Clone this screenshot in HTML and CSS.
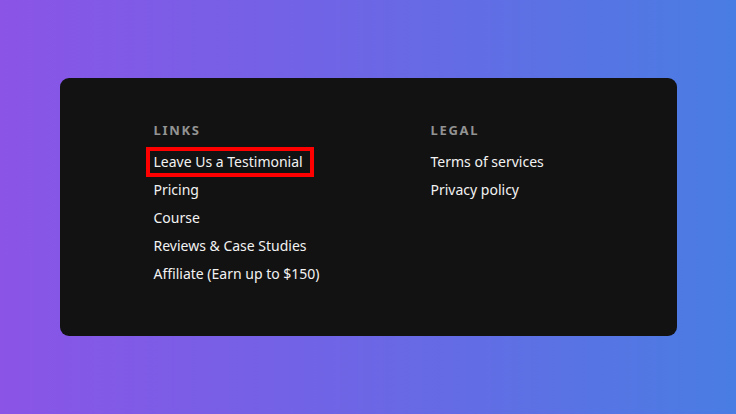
FILE: index.html
```html
<!DOCTYPE html>
<html lang="en">
<head>
<meta charset="utf-8">
<title>Footer</title>
<link rel="stylesheet" href="styles.css">
</head>
<body>
  <footer class="footer">
    <div class="footer-grid">
      <nav class="footer-col">
        <h3 class="footer-title">LINKS</h3>
        <ul class="footer-list">
          <li><a class="footer-link is-focused" href="#">Leave Us a Testimonial</a></li>
          <li><a class="footer-link" href="#">Pricing</a></li>
          <li><a class="footer-link" href="#">Course</a></li>
          <li><a class="footer-link" href="#">Reviews &amp; Case Studies</a></li>
          <li><a class="footer-link" href="#">Affiliate (Earn up to $150)</a></li>
        </ul>
      </nav>
      <nav class="footer-col">
        <h3 class="footer-title">LEGAL</h3>
        <ul class="footer-list">
          <li><a class="footer-link" href="#">Terms of services</a></li>
          <li><a class="footer-link" href="#">Privacy policy</a></li>
        </ul>
      </nav>
    </div>
  </footer>
</body>
</html>
```

FILE: styles.css
```css
* {
  box-sizing: border-box;
}

html, body {
  height: 100%;
}

body {
  margin: 0;
  display: flex;
  align-items: center;
  justify-content: center;
  background: linear-gradient(90deg, #8b54e7 0%, #6c66e5 50%, #497de3 100%);
  font-family: "Noto Sans", "Open Sans", sans-serif;
}

.footer {
  width: 617px;
  height: 258px;
  background: #121212;
  border-radius: 9px;
  padding: 40px 94px 0;
}

.footer-grid {
  display: grid;
  grid-template-columns: 277px 1fr;
}

.footer-title {
  margin: 0 0 10px;
  font-size: 13px;
  line-height: 24px;
  font-weight: 700;
  letter-spacing: 1.7px;
  color: #939393;
}

.footer-list {
  list-style: none;
  margin: 0;
  padding: 0;
  display: flex;
  flex-direction: column;
  gap: 8px;
}

.footer-list li {
  font-size: 14px;
  line-height: 20px;
}

.footer-link {
  font-size: 14px;
  color: #f2f2f2;
  text-decoration: none;
}

.footer-link.is-focused {
  display: inline-block;
  padding: 0 3px 0 0;
  outline: 4px solid #ff0000;
  outline-offset: 4px;
  line-height: 14px;
  vertical-align: top;
  margin-top: 3px;
}
```
